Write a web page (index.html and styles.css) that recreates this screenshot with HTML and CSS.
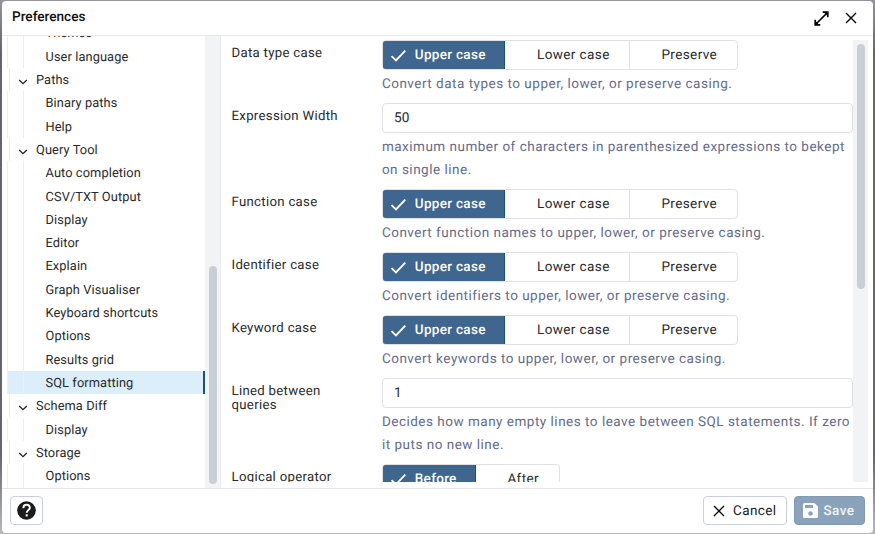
FILE: index.html
```html
<!DOCTYPE html>
<html lang="en">
<head>
<meta charset="utf-8">
<title>Preferences</title>
<link rel="stylesheet" href="styles.css">
</head>
<body>
<svg class="defs" width="0" height="0">
  <symbol id="check" viewBox="0 0 18 14"><path d="M1.5 7.6 6.3 12.2 16.3 1.8" fill="none" stroke="currentColor" stroke-width="2"/></symbol>
  <symbol id="chev" viewBox="0 0 10 6"><path d="M1.2 1 5 4.7 8.8 1" fill="none" stroke="currentColor" stroke-width="1.3"/></symbol>
  <symbol id="x" viewBox="0 0 12 12"><path d="M1 1 11 11M11 1 1 11" fill="none" stroke="currentColor" stroke-width="1.35"/></symbol>
</svg>
<div class="dialog">
  <header class="header">
    <h1 class="title">Preferences</h1>
    <svg class="expand" viewBox="0 0 15 15"><path d="M8.7 1.2H13.8V6.3M1.2 8.7V13.8H6.3M2 13 13 2" fill="none" stroke="#000" stroke-width="1.7"/><path d="M9.6 1H14V5.4zM1 9.6V14H5.4z"/></svg>
    <svg class="close"><use href="#x"/></svg>
  </header>
  <main class="main">
    <nav class="tree">
      <ul class="nodes">
        <li class="leaf">Themes</li>
        <li class="leaf">User language</li>
        <li class="group"><svg class="chev"><use href="#chev"/></svg>Paths</li>
        <li class="leaf">Binary paths</li>
        <li class="leaf">Help</li>
        <li class="group"><svg class="chev"><use href="#chev"/></svg>Query Tool</li>
        <li class="leaf">Auto completion</li>
        <li class="leaf">CSV/TXT Output</li>
        <li class="leaf">Display</li>
        <li class="leaf">Editor</li>
        <li class="leaf">Explain</li>
        <li class="leaf">Graph Visualiser</li>
        <li class="leaf">Keyboard shortcuts</li>
        <li class="leaf">Options</li>
        <li class="leaf">Results grid</li>
        <li class="leaf selected">SQL formatting</li>
        <li class="group"><svg class="chev"><use href="#chev"/></svg>Schema Diff</li>
        <li class="leaf">Display</li>
        <li class="group"><svg class="chev"><use href="#chev"/></svg>Storage</li>
        <li class="leaf">Options</li>
      </ul>
      <div class="track tree-track"><div class="thumb"></div></div>
    </nav>
    <section class="panel">
      <div class="fields">
        <div class="field">
          <div class="label">Data type case</div>
          <div class="control">
            <div class="toggle"><span class="opt on"><svg class="check"><use href="#check"/></svg>Upper case</span><span class="opt lower">Lower case</span><span class="opt preserve">Preserve</span></div>
            <p class="help">Convert data types to upper, lower, or preserve casing.</p>
          </div>
        </div>
        <div class="field tall">
          <div class="label">Expression Width</div>
          <div class="control">
            <div class="input">50</div>
            <p class="help">maximum number of characters in parenthesized expressions to bekept<br>on single line.</p>
          </div>
        </div>
        <div class="field">
          <div class="label">Function case</div>
          <div class="control">
            <div class="toggle"><span class="opt on"><svg class="check"><use href="#check"/></svg>Upper case</span><span class="opt lower">Lower case</span><span class="opt preserve">Preserve</span></div>
            <p class="help">Convert function names to upper, lower, or preserve casing.</p>
          </div>
        </div>
        <div class="field">
          <div class="label">Identifier case</div>
          <div class="control">
            <div class="toggle"><span class="opt on"><svg class="check"><use href="#check"/></svg>Upper case</span><span class="opt lower">Lower case</span><span class="opt preserve">Preserve</span></div>
            <p class="help">Convert identifiers to upper, lower, or preserve casing.</p>
          </div>
        </div>
        <div class="field">
          <div class="label">Keyword case</div>
          <div class="control">
            <div class="toggle"><span class="opt on"><svg class="check"><use href="#check"/></svg>Upper case</span><span class="opt lower">Lower case</span><span class="opt preserve">Preserve</span></div>
            <p class="help">Convert keywords to upper, lower, or preserve casing.</p>
          </div>
        </div>
        <div class="field tall">
          <div class="label">Lined between queries</div>
          <div class="control">
            <div class="input">1</div>
            <p class="help">Decides how many empty lines to leave between SQL statements. If zero<br>it puts no new line.</p>
          </div>
        </div>
        <div class="field">
          <div class="label">Logical operator</div>
          <div class="control">
            <div class="toggle"><span class="opt on before"><svg class="check"><use href="#check"/></svg>Before</span><span class="opt after">After</span></div>
          </div>
        </div>
      </div>
      <div class="track panel-track"><div class="thumb"></div></div>
    </section>
  </main>
  <footer class="footer">
    <button class="btn help-btn" aria-label="Help"><svg class="help-icon" viewBox="0 0 20 20"><circle cx="10" cy="10" r="9.8" fill="#1b1b1b"/><path d="M6.7 7.5C6.7 5.2 8.2 3.9 10.1 3.9s3.4 1.2 3.4 3.1c0 2.5-3.3 2.7-3.3 5.4" fill="none" stroke="#fff" stroke-width="2"/><rect x="9.1" y="14" width="2.2" height="2.2" fill="#fff"/></svg></button>
    <button class="btn cancel"><svg class="close"><use href="#x"/></svg>Cancel</button>
    <button class="btn save"><svg class="disk" viewBox="0 0 15 15"><path fill-rule="evenodd" d="M1.6 0H11.4L15 3.6V13.4Q15 15 13.4 15H1.6Q0 15 0 13.4V1.6Q0 0 1.6 0ZM2 2V5H10V2ZM7.5 8.2a2.3 2.3 0 1 0 0 4.6a2.3 2.3 0 1 0 0-4.6Z"/></svg>Save</button>
  </footer>
</div>
</body>
</html>
```
FILE: styles.css
```css
* { box-sizing: border-box; }
body {
  margin: 0;
  width: 875px;
  height: 534px;
  padding: 1px 2px 1px 1.5px;
  overflow: hidden;
  background: linear-gradient(#96949b, #67656c 10%, #67656c 85%, #b9b9be);
  font-family: Roboto, sans-serif;
  font-size: 13.6px;
  color: #2a2a2a;
  text-rendering: geometricPrecision;
}
.defs { position: absolute; }
.dialog {
  height: 532px;
  display: flex;
  flex-direction: column;
  background: #fff;
  border-radius: 4px;
  overflow: hidden;
}
.header {
  height: 34.5px;
  flex: none;
  display: flex;
  align-items: center;
  border-bottom: 1.5px solid #e8e9f1;
  padding: 0 16.5px 0 10.5px;
}
.title {
  margin: 0;
  flex: 1;
  font-size: 13.6px;
  font-weight: 500;
  letter-spacing: 0;
  color: #111;
  padding-bottom: 2px;
}
.expand { width: 15px; height: 15px; margin: 1px 16px 0 0; fill: #000; }
.close { width: 12px; height: 12px; color: #000; }
.header .close { margin-top: 1px; }
.main { height: 452px; flex: none; display: flex; }
.tree {
  width: 219.5px;
  flex: none;
  display: flex;
  overflow: hidden;
  border-right: 1.5px solid #e8e9f1;
  padding-left: 5.5px;
}
.nodes {
  width: 198px;
  margin: -14.2px 0 0;
  padding: 0;
  list-style: none;
  letter-spacing: 0.1px;
  font-size: 12.8px;
}
.nodes li { height: 23.32px; line-height: 25.4px; display: flex; white-space: nowrap; }
.leaf { border-left: 1px solid #edeef3; }
.leaf::before { content: ""; width: 1px; margin: 0 22px 0 14.5px; background: #edeef3; }
.group { margin-left: 2px; border-left: 1px solid #edeef3; }
.chev { width: 10px; height: 6px; margin: 11px 8px 0 8px; color: #222; }
.nodes .selected { background: #dceefa; border-right: 2.5px solid #17517f; }
.track { width: 15px; flex: none; background: #f1f3f5; padding: 4px; }
.thumb { width: 8px; border-radius: 4px; background: #cacfd6; }
.tree-track .thumb { height: 218px; margin-top: 226.5px; }
.panel { flex: 1; min-width: 0; display: flex; justify-content: space-between; padding: 4.5px 5px 5.5px 10.5px; }
.fields { width: 622px; overflow: hidden; }
.panel-track .thumb { height: 245px; }
.field { height: 63px; display: flex; }
.field.tall { height: 86px; }
.label { width: 150px; padding-right: 30px; flex: none; padding-top: 7px; line-height: 14px; letter-spacing: 0.3px; font-size: 13.2px; }
.control { width: 471px; flex: none; }
.toggle { display: inline-flex; height: 30px; vertical-align: top; border: 1px solid #dfe1e7; border-radius: 4px; overflow: hidden; }
.opt { display: flex; align-items: center; letter-spacing: 0.4px; font-size: 13.5px; }
.on { width: 123px; margin: -1px 0 -1px -1px; padding-left: 7.3px; background: #3f668f; border: 1px solid #17517f; border-radius: 4px 0 0 4px; color: #fff; font-weight: 500; letter-spacing: 0.3px; }
.check { width: 17px; height: 13px; margin: 0 8px 0 0; }
.lower { width: 125px; padding-left: 32.5px; border-right: 1px solid #dfe1e7; }
.preserve { width: 107px; padding-left: 31.9px; }
.before { width: 94px; }
.after { width: 83px; padding-left: 31.9px; }
.help { margin: 3px 0 0 0.4px; line-height: 23px; letter-spacing: 0.5px; font-size: 13.5px; color: #656b88; white-space: nowrap; }
.input { height: 30px; line-height: 28px; padding-left: 11.5px; border: 1px solid #dfe1e7; border-radius: 4px; font-size: 13.6px; letter-spacing: 0; }
.footer { flex: 1; display: flex; align-items: center; border-top: 1.5px solid #e5e6ec; padding: 0 8.5px 0 8.5px; }
.btn { height: 29px; display: flex; align-items: center; padding: 0 9.5px; border: 1px solid #cbcedd; border-radius: 4px; background: #fff; font: 400 13.5px Roboto, sans-serif; letter-spacing: 0.4px; color: #222; text-rendering: inherit; }
.help-btn { width: 33px; padding: 0 6px; margin-right: auto; }
.help-icon { width: 19px; height: 19px; flex: none; }
.cancel { width: 84px; margin-right: 7px; }
.cancel .close { margin-right: 8px; flex: none; }
.save { width: 71px; padding: 0 8px; background: #8ba2bb; border-color: #8099b5; color: #f1f4f8; font-weight: 500; }
.disk { width: 15px; height: 15px; margin-right: 6px; flex: none; fill: #fff; }
```
